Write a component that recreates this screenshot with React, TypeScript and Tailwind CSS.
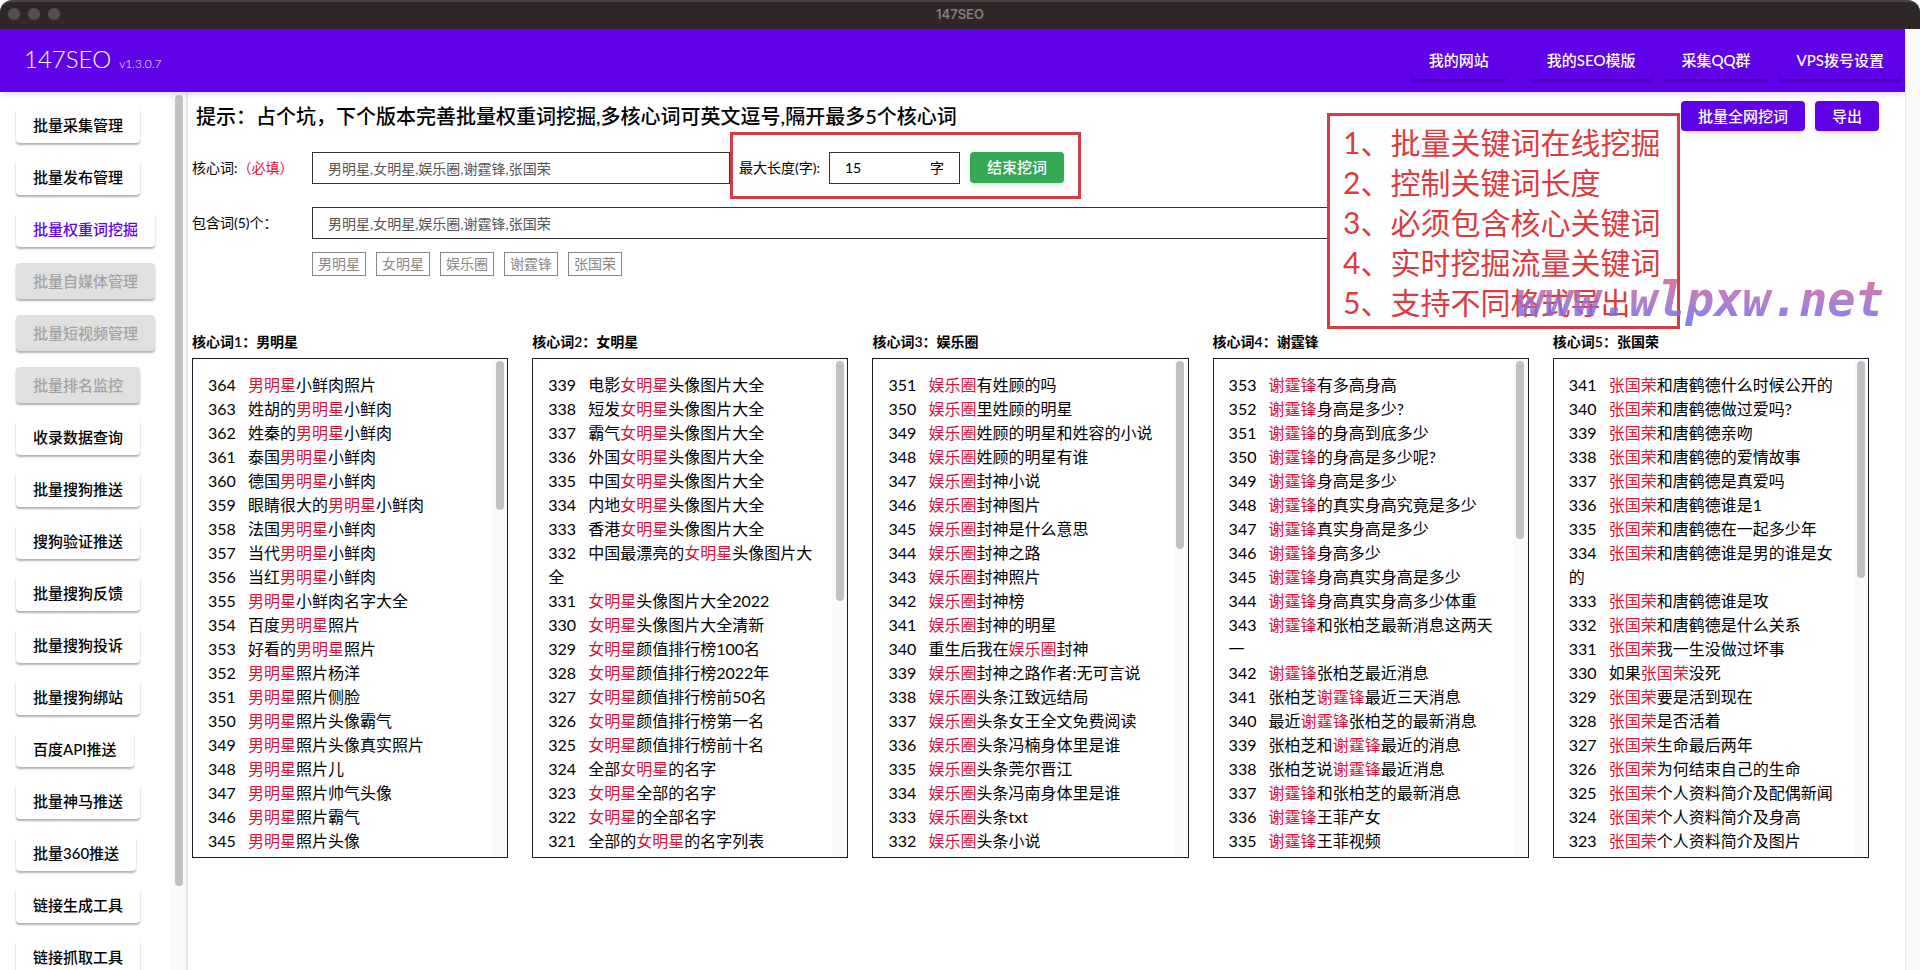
import { useState } from 'react';

interface Column {
  word: string;
  start: number;
  thumb: string;
  rows: string[];
}

interface MenuItem {
  label: string;
  disabled?: boolean;
}

const FONT = "font-['Lato','Noto_Sans_CJK_SC',sans-serif]";

const menu: MenuItem[] = [
  { label: '批量采集管理' },
  { label: '批量发布管理' },
  { label: '批量权重词挖掘' },
  { label: '批量自媒体管理', disabled: true },
  { label: '批量短视频管理', disabled: true },
  { label: '批量排名监控', disabled: true },
  { label: '收录数据查询' },
  { label: '批量搜狗推送' },
  { label: '搜狗验证推送' },
  { label: '批量搜狗反馈' },
  { label: '批量搜狗投诉' },
  { label: '批量搜狗绑站' },
  { label: '百度API推送' },
  { label: '批量神马推送' },
  { label: '批量360推送' },
  { label: '链接生成工具' },
  { label: '链接抓取工具' },
];

const words = ['男明星', '女明星', '娱乐圈', '谢霆锋', '张国荣'];

const notes = [
  '1、批量关键词在线挖掘',
  '2、控制关键词长度',
  '3、必须包含核心关键词',
  '4、实时挖掘流量关键词',
  '5、支持不同格式导出',
];

const columns: Column[] = [
  {
    word: '男明星',
    start: 364,
    thumb: 'h-[149px]',
    rows: [
      '男明星小鲜肉照片',
      '姓胡的男明星小鲜肉',
      '姓秦的男明星小鲜肉',
      '泰国男明星小鲜肉',
      '德国男明星小鲜肉',
      '眼睛很大的男明星小鲜肉',
      '法国男明星小鲜肉',
      '当代男明星小鲜肉',
      '当红男明星小鲜肉',
      '男明星小鲜肉名字大全',
      '百度男明星照片',
      '好看的男明星照片',
      '男明星照片杨洋',
      '男明星照片侧脸',
      '男明星照片头像霸气',
      '男明星照片头像真实照片',
      '男明星照片儿',
      '男明星照片帅气头像',
      '男明星照片霸气',
      '男明星照片头像',
    ],
  },
  {
    word: '女明星',
    start: 339,
    thumb: 'h-[240px]',
    rows: [
      '电影女明星头像图片大全',
      '短发女明星头像图片大全',
      '霸气女明星头像图片大全',
      '外国女明星头像图片大全',
      '中国女明星头像图片大全',
      '内地女明星头像图片大全',
      '香港女明星头像图片大全',
      '中国最漂亮的女明星头像图片大全',
      '女明星头像图片大全2022',
      '女明星头像图片大全清新',
      '女明星颜值排行榜100名',
      '女明星颜值排行榜2022年',
      '女明星颜值排行榜前50名',
      '女明星颜值排行榜第一名',
      '女明星颜值排行榜前十名',
      '全部女明星的名字',
      '女明星全部的名字',
      '女明星的全部名字',
      '全部的女明星的名字列表',
    ],
  },
  {
    word: '娱乐圈',
    start: 351,
    thumb: 'h-[188px]',
    rows: [
      '娱乐圈有姓顾的吗',
      '娱乐圈里姓顾的明星',
      '娱乐圈姓顾的明星和姓容的小说',
      '娱乐圈姓顾的明星有谁',
      '娱乐圈封神小说',
      '娱乐圈封神图片',
      '娱乐圈封神是什么意思',
      '娱乐圈封神之路',
      '娱乐圈封神照片',
      '娱乐圈封神榜',
      '娱乐圈封神的明星',
      '重生后我在娱乐圈封神',
      '娱乐圈封神之路作者:无可言说',
      '娱乐圈头条江致远结局',
      '娱乐圈头条女王全文免费阅读',
      '娱乐圈头条冯楠身体里是谁',
      '娱乐圈头条莞尔晋江',
      '娱乐圈头条冯南身体里是谁',
      '娱乐圈头条txt',
      '娱乐圈头条小说',
    ],
  },
  {
    word: '谢霆锋',
    start: 353,
    thumb: 'h-[178px]',
    rows: [
      '谢霆锋有多高身高',
      '谢霆锋身高是多少?',
      '谢霆锋的身高到底多少',
      '谢霆锋的身高是多少呢?',
      '谢霆锋身高是多少',
      '谢霆锋的真实身高究竟是多少',
      '谢霆锋真实身高是多少',
      '谢霆锋身高多少',
      '谢霆锋身高真实身高是多少',
      '谢霆锋身高真实身高多少体重',
      '谢霆锋和张柏芝最新消息这两天一',
      '谢霆锋张柏芝最近消息',
      '张柏芝谢霆锋最近三天消息',
      '最近谢霆锋张柏芝的最新消息',
      '张柏芝和谢霆锋最近的消息',
      '张柏芝说谢霆锋最近消息',
      '谢霆锋和张柏芝的最新消息',
      '谢霆锋王菲产女',
      '谢霆锋王菲视频',
    ],
  },
  {
    word: '张国荣',
    start: 341,
    thumb: 'h-[217px]',
    rows: [
      '张国荣和唐鹤德什么时候公开的',
      '张国荣和唐鹤德做过爱吗?',
      '张国荣和唐鹤德亲吻',
      '张国荣和唐鹤德的爱情故事',
      '张国荣和唐鹤德是真爱吗',
      '张国荣和唐鹤德谁是1',
      '张国荣和唐鹤德在一起多少年',
      '张国荣和唐鹤德谁是男的谁是女的',
      '张国荣和唐鹤德谁是攻',
      '张国荣和唐鹤德是什么关系',
      '张国荣我一生没做过坏事',
      '如果张国荣没死',
      '张国荣要是活到现在',
      '张国荣是否活着',
      '张国荣生命最后两年',
      '张国荣为何结束自己的生命',
      '张国荣个人资料简介及配偶新闻',
      '张国荣个人资料简介及身高',
      '张国荣个人资料简介及图片',
    ],
  },
];

function Highlighted({ text, word }: { text: string; word: string }) {
  const at = text.indexOf(word);
  if (at < 0) return <>{text}</>;
  return (
    <>
      {text.slice(0, at)}
      <span className="text-[#dc143c]">{word}</span>
      {text.slice(at + word.length)}
    </>
  );
}

function TitleBar() {
  return (
    <div className="bg-white">
      <div className="grid h-[29px] grid-cols-3 items-center rounded-t-xl border-t-2 border-[#4a4245] bg-[#2f2628] px-2 pb-1">
        <div className="flex gap-2">
          <span className="size-3 rounded-full bg-[#574d4f]" />
          <span className="size-3 rounded-full bg-[#574d4f]" />
          <span className="size-3 rounded-full bg-[#574d4f]" />
        </div>
        <p className="text-center font-['Inter','Noto_Sans_CJK_SC',sans-serif] text-[13px] leading-4 font-semibold text-[#857b7d]">147SEO</p>
      </div>
    </div>
  );
}

function Header() {
  return (
    <header className="relative z-10 flex h-[63px] shrink-0 items-center justify-between bg-[#6002e8] pr-1 pl-6 text-white shadow-md">
      <h1 className="flex items-baseline gap-2 pb-1 text-2xl font-light">
        147SEO <small className="text-xs">v1.3.0.7</small>
      </h1>
      <nav className="flex gap-3 text-[15px] font-medium">
        <button type="button" className="mr-3 h-9 rounded px-[17px] shadow-[0_3px_2px_rgba(0,0,0,0.2)]">我的网站</button>
        <button type="button" className="h-9 rounded px-[17px] shadow-[0_3px_2px_rgba(0,0,0,0.2)]">我的SEO模版</button>
        <button type="button" className="h-9 rounded px-[17px] shadow-[0_3px_2px_rgba(0,0,0,0.2)]">采集QQ群</button>
        <button type="button" className="h-9 rounded px-[17px] shadow-[0_3px_2px_rgba(0,0,0,0.2)]">VPS拨号设置</button>
      </nav>
    </header>
  );
}

function Sidebar() {
  const [active, setActive] = useState('批量权重词挖掘');

  return (
    <aside className="flex w-[188px] shrink-0 overflow-hidden border-r-2 border-[#e8e8e8]">
      <div className="flex flex-1 flex-col items-start gap-4 pt-[15px] pl-4">
        {menu.map((item) => (
          <button
            key={item.label}
            type="button"
            disabled={item.disabled}
            onClick={() => setActive(item.label)}
            className={`h-9 shrink-0 rounded px-[17px] text-[15px] font-medium whitespace-nowrap shadow-[0_2px_2px_rgba(0,0,0,0.3)] ${
              item.disabled ? 'bg-[#e0e0e0] text-[#a3a3a3]' : item.label === active ? 'bg-white text-[#6200ee]' : 'bg-white text-black'
            }`}
          >
            {item.label}
          </button>
        ))}
      </div>
      {/* scroll track */}
      <div className="flex w-[15px] justify-center bg-[#fafafa] pt-[3px]">
        <div className="h-[791px] w-2 rounded-full bg-[#c1c1c1]" />
      </div>
    </aside>
  );
}

function KeywordColumn({ column, index }: { column: Column; index: number }) {
  return (
    <section className="min-w-0 flex-1">
      <h3 className="mb-1.5 text-sm leading-5 font-semibold">
        核心词{index + 1}：{column.word}
      </h3>
      <div className="flex h-[500px] overflow-hidden border border-[#1c1c2c]">
        <ul className="min-w-0 flex-1 px-[15px] pt-3.5 text-base leading-6">
          {column.rows.map((row, i) => (
            <li key={row} className="break-all">
              <span className="inline-block w-10">{column.start - i}</span>
              <Highlighted text={row} word={column.word} />
            </li>
          ))}
        </ul>
        <div className="flex w-[15px] justify-center bg-[#fafafa] pt-0.5">
          <div className={`w-2 rounded-full bg-[#c1c1c1] ${column.thumb}`} />
        </div>
      </div>
    </section>
  );
}

function Notes() {
  return (
    <div className="absolute top-[21px] right-[225px] w-[353px] border-3 border-[#cf3f45] bg-white pt-1.5 pb-1 pl-[13px] text-[30px] leading-10 text-[#dc3b40]">
      {notes.map((note) => (
        <p key={note}>{note}</p>
      ))}
      <p className="absolute top-[156px] left-[186px] bg-linear-to-b from-[#d0609c] from-20% to-[#6a6af0] to-90% bg-clip-text pr-2 font-['DejaVu_Sans_Mono',monospace] text-[47px] leading-[56px] font-bold text-transparent italic opacity-85">
        www.wlpxw.net
      </p>
    </div>
  );
}

export default function App() {
  const [core, setCore] = useState(words.join(','));
  const [include, setInclude] = useState(words.join(','));
  const [maxLength, setMaxLength] = useState('15');

  return (
    <div className={`flex h-screen flex-col overflow-hidden bg-white text-black ${FONT}`}>
      <TitleBar />
      <div className="flex min-h-0 flex-1">
        <div className="flex min-w-0 flex-1 flex-col">
          <Header />
          <div className="flex min-h-0 flex-1">
            <Sidebar />
            <main className="relative min-w-0 flex-1 pr-9 pl-1">
              <div className="flex h-12 items-center justify-between">
                <h2 className="pl-1 text-xl font-medium">
                  提示：占个坑，下个版本完善批量权重词挖掘,多核心词可英文逗号,隔开最多5个核心词
                </h2>
                <div className="-mr-2.5 flex gap-2.5 text-[15px] font-medium text-white">
                  <button type="button" className="h-[30px] rounded bg-[#6002e8] px-[17px] shadow-md">批量全网挖词</button>
                  <button type="button" className="h-[30px] rounded bg-[#6002e8] px-[17px] shadow-md">导出</button>
                </div>
              </div>

              <div className="-mt-2 flex items-center text-sm">
                <div className="flex items-center pt-1">
                  <label htmlFor="core" className="w-[120px]">
                    核心词:<span className="text-[#dc143c]">（必填）</span>
                  </label>
                  <input
                    id="core"
                    value={core}
                    onChange={(e) => setCore(e.target.value)}
                    className="h-8 w-[418px] border border-[#333] px-[15px] text-[#555]"
                  />
                </div>
                <div className="flex h-[67px] w-[351px] items-center border-3 border-[#cf3f45] pt-1 pl-1.5">
                  <label htmlFor="max-length" className="w-[90px]">最大长度(字):</label>
                  <div className="flex h-8 w-[131px] items-center border border-[#333] px-[15px]">
                    <input
                      id="max-length"
                      value={maxLength}
                      onChange={(e) => setMaxLength(e.target.value)}
                      className="min-w-0 flex-1"
                    />
                    <span>字</span>
                  </div>
                  <button type="button" className="ml-2.5 h-[31px] rounded bg-[#34a853] px-[17px] text-[15px] font-medium text-white shadow-md">
                    结束挖词
                  </button>
                </div>
              </div>

              <div className="mt-2 flex items-center text-sm">
                <label htmlFor="include" className="w-[120px]">包含词(5)个：</label>
                <input
                  id="include"
                  value={include}
                  onChange={(e) => setInclude(e.target.value)}
                  className="mr-[210px] h-8 flex-1 border border-[#333] px-[15px] text-[#555]"
                />
              </div>

              <div className="mt-[13px] flex gap-2.5 pl-[120px] text-sm text-[#888]">
                {words.map((word) => (
                  <span key={word} className="flex h-6 w-[54px] items-center justify-center border border-[#888]">
                    {word}
                  </span>
                ))}
              </div>

              <div className="mt-14 flex gap-6">
                {columns.map((column, i) => (
                  <KeywordColumn key={column.word} column={column} index={i} />
                ))}
              </div>

              <Notes />
            </main>
          </div>
        </div>
        <div className="w-[15px] shrink-0 border-l border-[#ececec] bg-[#fafafa]" />
      </div>
    </div>
  );
}
